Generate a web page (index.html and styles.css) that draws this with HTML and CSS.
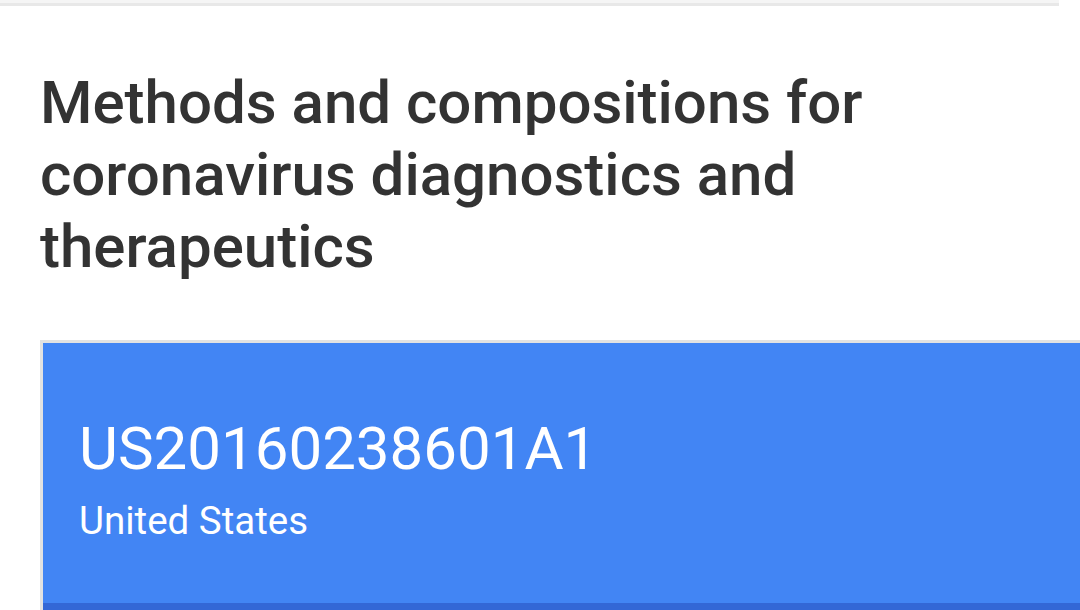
FILE: index.html
```html
<!DOCTYPE html>
<html lang="en">
<head>
<meta charset="utf-8">
<title>US20160238601A1</title>
<link rel="stylesheet" href="styles.css">
</head>
<body>
<div class="topbar"></div>
<main class="page">
  <h1 class="title">Methods and compositions for coronavirus diagnostics and therapeutics</h1>
  <section class="card">
    <div class="card-body">
      <div class="pub-number">US20160238601A1</div>
      <div class="country">United States</div>
    </div>
    <div class="card-tabs"></div>
  </section>
</main>
</body>
</html>
```

FILE: styles.css
```css
html, body {
  margin: 0;
  padding: 0;
  background: #ffffff;
  overflow: hidden;
  font-family: Roboto, "Liberation Sans", Arial, sans-serif;
}

.topbar {
  width: 1059px;
  height: 3px;
  background: #f5f5f5;
  border-bottom: 3px solid #e8e8e8;
}

.page {
  padding-left: 40px;
}

.title {
  margin: 61px 0 0 0;
  width: 880px;
  font-size: 60px;
  line-height: 72px;
  font-weight: 500;
  color: #333333;
}

.card {
  margin-top: 57px;
  border-left: 3px solid #e2e2e2;
  border-top: 3px solid #e2e2e2;
}

.card-body {
  background: #4285f4;
  color: #ffffff;
  padding: 69px 36px 60px 36px;
}

.pub-number {
  font-size: 60px;
  line-height: 74px;
  font-weight: 400;
}

.country {
  margin-top: 13px;
  font-size: 38.5px;
  line-height: 44px;
  font-weight: 400;
}

.card-tabs {
  height: 20px;
  background: #3367d6;
}
```
